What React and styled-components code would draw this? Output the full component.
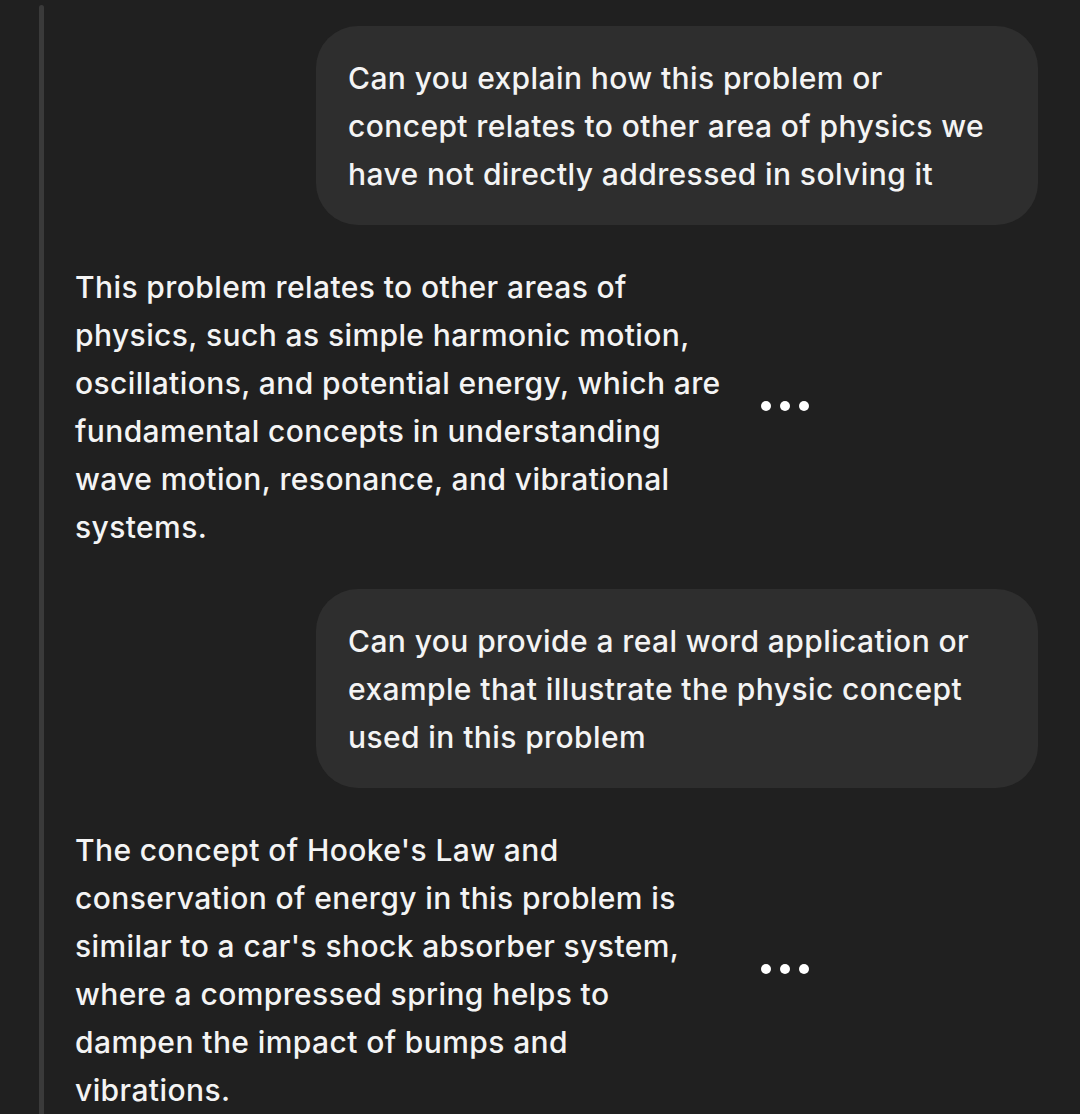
import React from "react";
import styled, { createGlobalStyle } from "styled-components";

const Global = createGlobalStyle`
  html, body { margin: 0; padding: 0; background: #202020; }
  body { font-family: Inter, "Noto Sans", sans-serif; -webkit-font-smoothing: antialiased; }
`;

const Page = styled.div`
  width: 1080px;
  height: 1114px;
  overflow: hidden;
  background: #202020;
  display: flex;
`;

const Gutter = styled.div`
  width: 39px;
  flex: none;
`;

const Rail = styled.div`
  width: 5px;
  flex: none;
  margin-top: 5px;
  background: #3a3a3a;
  border-radius: 3px 3px 0 0;
`;

const Thread = styled.div`
  flex: 1;
  display: flex;
  flex-direction: column;
  padding: 26px 42px 0 31px;
  gap: 38px;
`;

const UserRow = styled.div`
  display: flex;
  justify-content: flex-end;
`;

const Bubble = styled.div`
  width: 722px;
  box-sizing: border-box;
  padding: 28px 32px 27px;
  background: #2e2e2e;
  border-radius: 42px;
  color: #f4f4f4;
  font-size: 30px;
  font-weight: 500;
  letter-spacing: 0.4px;
  line-height: 48px;
  white-space: nowrap;
`;

const BotRow = styled.div`
  display: flex;
  align-items: center;
`;

const BotText = styled.div`
  width: 686px;
  flex: none;
  color: #f4f4f4;
  font-size: 30px;
  font-weight: 500;
  letter-spacing: 0.4px;
  line-height: 48px;
  white-space: nowrap;
`;

const Dots = styled.div`
  display: flex;
  gap: 9px;
  margin-top: -2px;
`;

const Dot = styled.span`
  width: 10px;
  height: 10px;
  border-radius: 50%;
  background: #ffffff;
`;

const Lines = ({ lines }) =>
  lines.map((l, i) => (
    <React.Fragment key={i}>
      {l}
      {i < lines.length - 1 && <br />}
    </React.Fragment>
  ));

const messages = [
  {
    role: "user",
    lines: [
      "Can you explain how this problem or",
      "concept relates to other area of physics we",
      "have not directly addressed in solving it",
    ],
  },
  {
    role: "bot",
    lines: [
      "This problem relates to other areas of",
      "physics, such as simple harmonic motion,",
      "oscillations, and potential energy, which are",
      "fundamental concepts in understanding",
      "wave motion, resonance, and vibrational",
      "systems.",
    ],
  },
  {
    role: "user",
    lines: [
      "Can you provide a real word application or",
      "example that illustrate the physic concept",
      "used in this problem",
    ],
  },
  {
    role: "bot",
    lines: [
      "The concept of Hooke's Law and",
      "conservation of energy in this problem is",
      "similar to a car's shock absorber system,",
      "where a compressed spring helps to",
      "dampen the impact of bumps and",
      "vibrations.",
    ],
  },
];

export default function App() {
  return (
    <>
      <Global />
      <Page>
        <Gutter />
        <Rail />
        <Thread>
          {messages.map((m, i) =>
            m.role === "user" ? (
              <UserRow key={i}>
                <Bubble>
                  <Lines lines={m.lines} />
                </Bubble>
              </UserRow>
            ) : (
              <BotRow key={i}>
                <BotText>
                  <Lines lines={m.lines} />
                </BotText>
                <Dots>
                  <Dot />
                  <Dot />
                  <Dot />
                </Dots>
              </BotRow>
            )
          )}
        </Thread>
      </Page>
    </>
  );
}
